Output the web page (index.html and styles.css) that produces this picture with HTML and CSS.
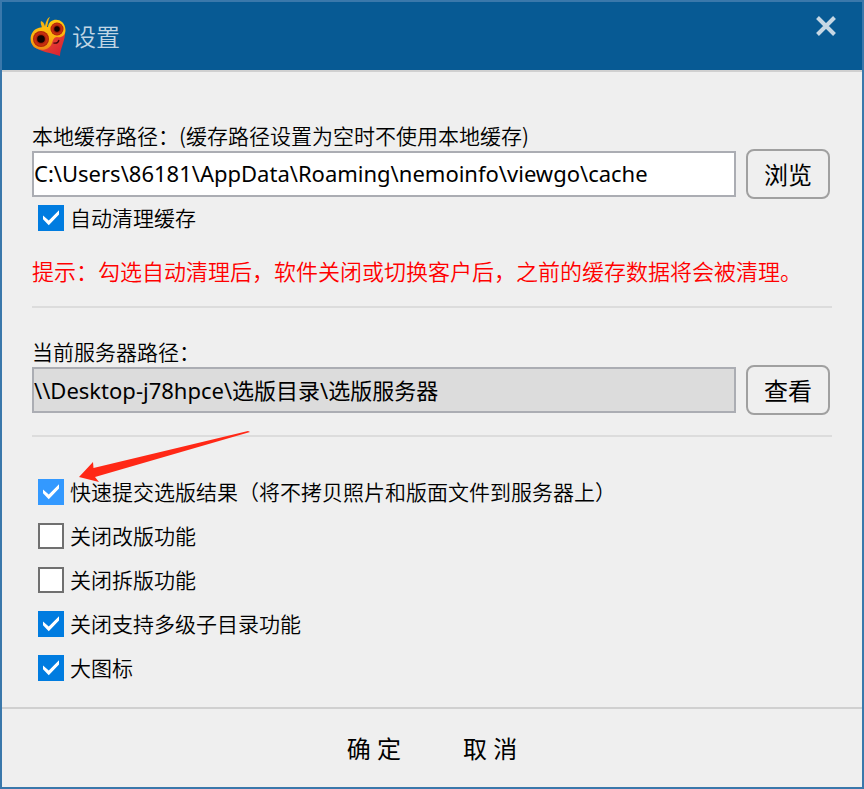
FILE: index.html
```html
<!DOCTYPE html>
<html lang="zh-CN">
<head>
<meta charset="utf-8">
<meta name="viewport" content="width=device-width, initial-scale=1">
<title>设置</title>
<link rel="stylesheet" href="styles.css">
</head>
<body>
<main class="dialog">
  <header class="titlebar">
    <svg class="logo" viewBox="0 0 36 40" aria-hidden="true">
      <defs>
        <linearGradient id="gold" x1="0" y1="0" x2="0" y2="1"><stop offset="0" stop-color="#ffc810"/><stop offset="0.6" stop-color="#fbb010"/><stop offset="1" stop-color="#ee8a14"/></linearGradient>
        <radialGradient id="eye"><stop offset="0.3" stop-color="#7a0d02"/><stop offset="0.75" stop-color="#cc3210"/><stop offset="1" stop-color="#a81f05"/></radialGradient>
        <linearGradient id="body" x1="0" y1="0" x2="1" y2="1"><stop offset="0" stop-color="#f0622c"/><stop offset="1" stop-color="#d81c34"/></linearGradient>
      </defs>
      <path d="M3 30 C10 36 22 37 30 40 C30 32 36 24 35 14 L20 12Z" fill="url(#body)"/>
      <path d="M12 13 C12 9 10 8 11 5 C14 6 14 8 15 10 C16 6 17 2 20 1 C18 4 18 7 17 11 L18 13Z" fill="#f6b511"/>
      <path d="M18 11 C19 1 35 1 35.500 14 C35.500 20 31 22 27 21 C24 21 23 24 22 27 C20 33 14 35 8 33 C-2 30 -1 17 6 13 C10 11 14 11 18 11Z" fill="url(#gold)"/>
      <circle cx="27" cy="13" r="6.500" fill="url(#eye)"/>
      <circle cx="11" cy="23" r="8" fill="url(#eye)"/>
      <circle cx="27" cy="13" r="2.700" fill="#120300"/>
      <circle cx="11" cy="23" r="3.800" fill="#120300"/>
      <path d="M23.500 27 Q28 28 29 24" fill="none" stroke="#48070c" stroke-width="1.300"/>
    </svg>
    <h1 class="title">设置</h1>
    <button class="close" type="button" aria-label="关闭">
      <svg class="close-icon" viewBox="0 0 20 20" aria-hidden="true"><path d="M1.500 1.500 L18.500 18.500 M18.500 1.500 L1.500 18.500"/></svg>
    </button>
  </header>

  <form class="form">
    <div class="content">
      <section class="group">
        <label class="label" for="cache">本地缓存路径：(缓存路径设置为空时不使用本地缓存)</label>
        <div class="path-row">
          <input class="path" id="cache" type="text" value="C:\Users\86181\AppData\Roaming\nemoinfo\viewgo\cache">
          <button class="side-button" type="button">浏览</button>
        </div>
        <label class="option"><input class="check" type="checkbox" checked><span class="option-text">自动清理缓存</span></label>
        <p class="hint">提示：勾选自动清理后，软件关闭或切换客户后，之前的缓存数据将会被清理。</p>
      </section>

      <section class="group server">
        <label class="label" for="server">当前服务器路径：</label>
        <div class="path-row">
          <input class="path" id="server" type="text" readonly value="\\Desktop-j78hpce\选版目录\选版服务器">
          <button class="side-button" type="button">查看</button>
        </div>
      </section>

      <section class="options">
        <svg class="arrow" viewBox="0 0 172 52" aria-hidden="true"><path d="M0 46 L14 31 L14.500 37 L169 0 L171 1 L16 46 L20 51Z"/></svg>
        <label class="option"><input class="check hot" type="checkbox" checked><span class="option-text">快速提交选版结果（将不拷贝照片和版面文件到服务器上）</span></label>
        <label class="option"><input class="check" type="checkbox"><span class="option-text">关闭改版功能</span></label>
        <label class="option"><input class="check" type="checkbox"><span class="option-text">关闭拆版功能</span></label>
        <label class="option"><input class="check" type="checkbox" checked><span class="option-text">关闭支持多级子目录功能</span></label>
        <label class="option"><input class="check" type="checkbox" checked><span class="option-text">大图标</span></label>
      </section>
    </div>

    <footer class="footer">
      <button class="action" type="submit">确 定</button>
      <button class="action" type="button">取 消</button>
    </footer>
  </form>
</main>
</body>
</html>
```
FILE: styles.css
```css
* { box-sizing: border-box; }

body {
  margin: 0;
  background: #efefef;
  color: #000;
  font-family: "Noto Sans", "Noto Sans CJK SC", sans-serif;
  font-size: 21px;
}

button, input {
  margin: 0;
  color: inherit;
  font: inherit;
}

.dialog {
  display: flex;
  flex-direction: column;
  min-height: 100vh;
  border: 2px solid #3a78ab;
}

.titlebar {
  display: flex;
  align-items: center;
  height: 70px;
  padding: 0 26px 0 28px;
  background: #075a94;
  border-bottom: 2px solid #d0d0d0;
}

.logo {
  width: 36px;
  height: 40px;
}

.title {
  flex: 1;
  margin: 0 0 0 6px;
  color: #c1d6e4;
  font-family: "Noto Sans CJK SC", sans-serif;
  font-size: 24px;
  font-weight: 350;
  line-height: 36px;
}

.close {
  align-self: flex-start;
  width: 20px;
  height: 20px;
  margin-top: 14px;
  padding: 0;
  background: none;
  border: 0;
}

.close-icon {
  display: block;
  width: 20px;
  height: 20px;
  fill: none;
  stroke: #c6d7e4;
  stroke-width: 4;
}

.form {
  display: flex;
  flex: 1;
  flex-direction: column;
}

.content {
  flex: 1;
  padding: 49px 30px 0;
}

.group {
  border-bottom: 2px solid #dcdcdc;
}

.label {
  display: block;
  font-family: "Noto Sans CJK SC", sans-serif;
  font-weight: 350;
  line-height: 28px;
}

.path-row {
  display: flex;
  align-items: center;
  gap: 10px;
  padding-right: 2px;
}

.path {
  flex: 1;
  min-width: 0;
  height: 46px;
  padding: 0 0 2px;
  background: #fff;
  border: 2px solid #abadb3;
  border-radius: 0;
  font-size: 22px;
}

.path:read-only { background: #dcdcdc; }

.side-button {
  width: 84px;
  height: 50px;
  padding: 0 0 2px;
  background: #efefef;
  border: 2px solid #a0a0a0;
  border-radius: 8px;
  font-size: 24px;
}

.option {
  display: flex;
  align-items: center;
  gap: 6px;
  height: 44px;
  padding-left: 6px;
  font-family: "Noto Sans CJK SC", sans-serif;
  font-weight: 350;
}

.option-text { padding-bottom: 2px; }

.group .option { height: 38px; }

.check {
  flex: none;
  width: 26px;
  height: 26px;
  appearance: none;
  background: #fff;
  border: 2px solid #707070;
}

.check:checked {
  display: grid;
  place-items: center;
  background: #007ce0;
  border-color: #007ce0;
}

.check:checked::before {
  content: "";
  width: 16px;
  height: 16px;
  background: #fff;
  clip-path: polygon(0 34%, 0 58%, 36% 96%, 100% 28%, 100% 2%, 36% 66%);
}

.check.hot:checked {
  background: #3399ff;
  border-color: #3399ff;
}

.hint {
  margin: 0;
  padding: 17px 0 20px;
  color: #f00;
  font-family: "Noto Sans CJK SC", sans-serif;
  font-size: 22px;
  font-weight: 350;
  line-height: 32px;
}

.server {
  padding: 29px 0 20px;
}

.options {
  position: relative;
  padding: 33px 0 17px;
}

.arrow {
  position: absolute;
  top: -6px;
  left: 47px;
  width: 172px;
  height: 52px;
  fill: #ff2816;
}

.footer {
  display: flex;
  justify-content: center;
  gap: 62px;
  padding: 19px 0 21px;
  border-top: 2px solid #d0d0d0;
}

.action {
  height: 38px;
  padding: 0;
  background: none;
  border: 0;
  font-size: 24px;
}
```
